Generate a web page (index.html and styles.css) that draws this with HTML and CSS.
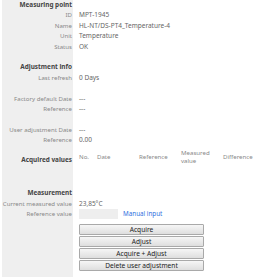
FILE: index.html
```html
<!DOCTYPE html>
<html>
<head>
<meta charset="utf-8">
<link rel="stylesheet" href="styles.css">
</head>
<body>
<div class="panel">
  <div class="row head"><div class="lbl">Measuring point</div><div class="val"></div></div>
  <div class="row"><div class="lbl">ID</div><div class="val">MPT-1945</div></div>
  <div class="row"><div class="lbl">Name</div><div class="val">HL-NT/DS-PT4_Temperature-4</div></div>
  <div class="row"><div class="lbl">Unit</div><div class="val">Temperature</div></div>
  <div class="row"><div class="lbl">Status</div><div class="val">OK</div></div>
  <div class="row gap"><div class="lbl"></div><div class="val"></div></div>
  <div class="row head"><div class="lbl">Adjustment info</div><div class="val"></div></div>
  <div class="row"><div class="lbl">Last refresh</div><div class="val">0 Days</div></div>
  <div class="row gap"><div class="lbl"></div><div class="val"></div></div>
  <div class="row"><div class="lbl">Factory default Date</div><div class="val">---</div></div>
  <div class="row"><div class="lbl">Reference</div><div class="val">---</div></div>
  <div class="row gap"><div class="lbl"></div><div class="val"></div></div>
  <div class="row"><div class="lbl">User adjustment Date</div><div class="val">---</div></div>
  <div class="row"><div class="lbl">Reference</div><div class="val">0.00</div></div>
  <div class="row acq">
    <div class="lbl acq-lbl">Acquired values</div>
    <div class="val acq-cols">
      <span class="c-no">No.</span>
      <span class="c-date">Date</span>
      <span class="c-ref">Reference</span>
      <span class="c-meas">Measured<br>value</span>
      <span class="c-diff">Difference</span>
    </div>
  </div>
  <div class="row gap2"><div class="lbl"></div><div class="val"></div></div>
  <div class="row head"><div class="lbl">Measurement</div><div class="val"></div></div>
  <div class="row"><div class="lbl">Current measured value</div><div class="val">23,85°C</div></div>
  <div class="row"><div class="lbl">Reference value</div><div class="val refval"><span class="box"></span><a class="link">Manual input</a></div></div>
  <div class="row btns">
    <div class="lbl"></div>
    <div class="val btn-col">
      <button class="btn">Acquire</button>
      <button class="btn">Adjust</button>
      <button class="btn">Acquire + Adjust</button>
      <button class="btn">Delete user adjustment</button>
    </div>
  </div>
</div>
</body>
</html>
```
FILE: styles.css
```css
html, body {
  margin: 0;
  padding: 0;
  background: #fff;
}
body {
  font-family: "Noto Sans", "Open Sans", sans-serif;
  font-size: 6.1px;
  color: #666;
  width: 262px;
  height: 277px;
  overflow: hidden;
}
.panel {
  display: flex;
  flex-direction: column;
}
.row {
  display: grid;
  grid-template-columns: 73px 1fr;
  column-gap: 6px;
  height: 10.4px;
  line-height: 10.4px;
  white-space: nowrap;
}
.lbl {
  margin-left: 2px;
  background: #efefef;
  text-align: right;
  padding-right: 1px;
  color: #888;
}
.val {
  color: #666;
  font-size: 6.5px;
}
.head .lbl {
  font-weight: bold;
  color: #444;
  font-size: 6.4px;
}
.gap { height: 10.4px; }
.acq {
  height: 24px;
  line-height: 10px;
}
.acq-lbl {
  display: flex;
  align-items: center;
  justify-content: flex-end;
  padding-top: 6px;
  font-weight: bold;
  font-size: 6.4px;
  color: #444;
}
.acq-cols {
  display: flex;
  align-items: center;
  color: #888;
  font-size: 6.1px;
  line-height: 8px;
}
.c-no { width: 18px; }
.c-date { width: 42px; }
.c-ref { width: 42px; }
.c-meas { width: 42px; }
.gap2 { height: 19px; }
.refval {
  display: flex;
  align-items: center;
  gap: 5px;
}
.box {
  display: inline-block;
  width: 39px;
  height: 10px;
  background: #eee;
}
.link {
  color: #2f6fe0;
  font-size: 6.3px;
}
.btns {
  height: auto;
  padding-top: 2px;
}
.btns .lbl { margin-top: -2px; height: 63px; }
.btn-col {
  display: flex;
  flex-direction: column;
  gap: 1px;
  padding-top: 2px;
}
.btn {
  width: 125px;
  height: 11px;
  margin: 0;
  padding: 0;
  border: 1px solid #a9a9a9;
  border-radius: 1px;
  background: linear-gradient(#f6f6f6, #dedede);
  font-family: "Noto Sans", "Open Sans", sans-serif;
  font-size: 6.6px;
  line-height: 9px;
  color: #222;
}
```
